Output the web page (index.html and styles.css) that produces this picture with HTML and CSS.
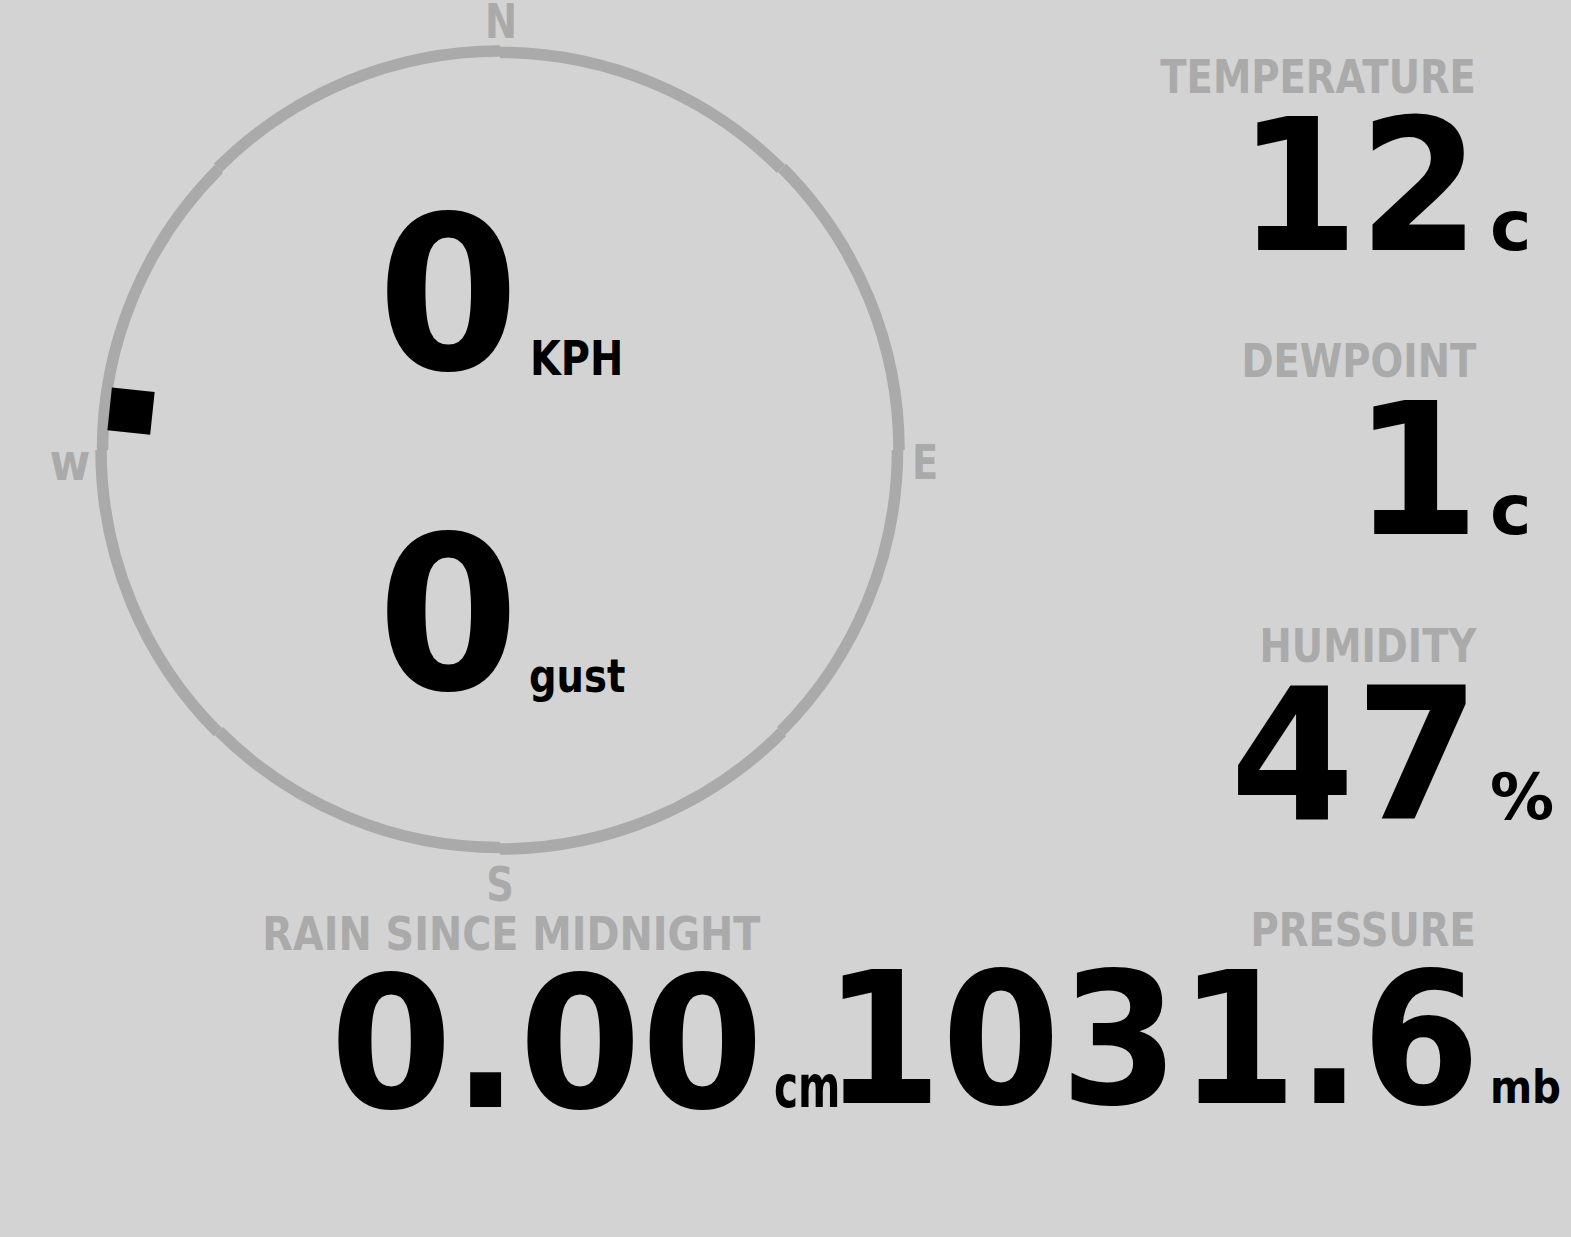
FILE: index.html
```html
<!DOCTYPE html>
<html lang="en">
<head>
<meta charset="utf-8">
<title>Weather</title>
<link rel="stylesheet" href="styles.css">
</head>
<body>
<div class="dash">
  <div class="left">
    <div class="compass">
      <svg class="dial" width="1000" height="905" viewBox="0 0 1000 905">
        <g class="ring">
          <path d="M500 52.5 A397.5 397.5 0 0 1 781.07 168.93"/>
          <path d="M782.14 167.86 A399 399 0 0 1 899 450"/>
          <path d="M897.5 450 A397.5 397.5 0 0 1 781.07 731.07"/>
          <path d="M782.14 732.14 A399 399 0 0 1 500 849"/>
          <path d="M500 847.5 A397.5 397.5 0 0 1 218.93 731.07"/>
          <path d="M217.86 732.14 A399 399 0 0 1 101 450"/>
          <path d="M102.5 450 A397.5 397.5 0 0 1 218.93 168.93"/>
          <path d="M217.86 167.86 A399 399 0 0 1 500 51"/>
        </g>
        <rect class="needle" x="478.5" y="57.5" width="43" height="43" transform="rotate(276 500 450)"/>
        <g class="cardinal">
          <text transform="translate(501 38) scale(.8 1)" text-anchor="middle">N</text>
          <text transform="translate(925 479) scale(.8 1)" text-anchor="middle">E</text>
          <text transform="translate(500 901) scale(.8 1)" text-anchor="middle">S</text>
          <text class="west" transform="translate(70 480) scale(.85 1)" text-anchor="middle">w</text>
        </g>
      </svg>
      <div class="speed-row"><span class="speed">0</span><span class="speed-unit">KPH</span></div>
      <div class="speed-row"><span class="speed">0</span><span class="speed-unit gust">gust</span></div>
    </div>
    <div class="reading rain">
      <div class="label rain-label">RAIN SINCE MIDNIGHT</div>
      <div class="value"><span class="num n-rain">0.00</span><span class="unit u-cm">cm</span></div>
    </div>
  </div>
  <div class="right">
    <div class="reading">
      <div class="label">TEMPERATURE</div>
      <div class="value"><span class="num n-temp">12</span><span class="unit u-c">c</span></div>
    </div>
    <div class="reading">
      <div class="label">DEWPOINT</div>
      <div class="value"><span class="num">1</span><span class="unit u-c">c</span></div>
    </div>
    <div class="reading">
      <div class="label">HUMIDITY</div>
      <div class="value"><span class="num n-hum">47</span><span class="unit u-pct">%</span></div>
    </div>
    <div class="reading">
      <div class="label">PRESSURE</div>
      <div class="value"><span class="num n-press">1031.6</span><span class="unit u-mb">mb</span></div>
    </div>
  </div>
</div>
</body>
</html>
```

FILE: styles.css
```css
html, body {
  margin: 0;
  padding: 0;
}
body {
  background: #d3d3d3;
  color: #000;
  font-family: "DejaVu Sans", "Liberation Sans", sans-serif;
  font-weight: bold;
}
.dash {
  display: flex;
  width: 1571px;
  height: 1237px;
  overflow: hidden;
}
.left {
  width: 1000px;
  flex: none;
  display: flex;
  flex-direction: column;
}
.compass {
  position: relative;
  height: 905px;
  box-sizing: border-box;
  padding-top: 195px;
  display: flex;
  flex-direction: column;
  gap: 120px;
}
.dial {
  position: absolute;
  left: 0;
  top: 0;
}
.ring path {
  fill: none;
  stroke: #aaaaaa;
  stroke-width: 11.5;
}
.needle {
  fill: #000;
}
.cardinal text {
  font-family: "DejaVu Sans", sans-serif;
  font-weight: bold;
  font-size: 48px;
  fill: #aaaaaa;
}
.cardinal .west {
  font-size: 52px;
}
.speed-row {
  position: relative;
  display: flex;
  align-items: baseline;
  height: 200px;
  padding-left: 370px;
  line-height: 200px;
}
.speed {
  font-size: 214px;
  transform: scaleX(.95);
  transform-origin: right;
}
.speed-unit {
  font-size: 48px;
  line-height: 1;
  margin-left: 11px;
  transform: translateY(6px) scaleX(.83);
  transform-origin: left;
}
.speed-unit.gust {
  font-size: 47px;
  margin-left: 10px;
  transform: translateY(3px) scaleX(.82);
}
.reading {
  display: flex;
  flex-direction: column;
  align-items: flex-end;
}
.rain {
  padding-top: 4.5px;
  padding-right: 145px;
}
.right {
  width: 571px;
  min-width: 0;
  flex: none;
  display: flex;
  flex-direction: column;
  padding-top: 52.5px;
  gap: 75.5px;
}
.label {
  font-size: 47px;
  line-height: 47px;
  height: 47px;
  color: #aaaaaa;
  margin-right: 95px;
  white-space: nowrap;
  transform: scaleX(.82);
  transform-origin: right;
}
.rain-label {
  transform: scaleX(.845);
}
.value {
  display: flex;
  align-items: baseline;
  height: 150px;
  margin-top: 12px;
  line-height: 150px;
  white-space: nowrap;
}
.num {
  font-size: 183px;
  transform-origin: right;
}
.n-temp {
  transform: scaleX(.95);
}
.n-hum {
  transform: scaleX(.98);
}
.n-rain {
  transform: scaleX(.96);
}
.n-press {
  transform: scaleX(.93);
}
.unit {
  width: 81px;
  margin-left: 10px;
  line-height: 1;
  transform-origin: left;
}
.u-c {
  font-size: 70px;
}
.u-pct {
  font-size: 64px;
}
.u-cm {
  font-size: 58px;
  transform: scaleX(.7);
}
.u-mb {
  font-size: 47px;
  transform: scaleX(.86);
}
```
